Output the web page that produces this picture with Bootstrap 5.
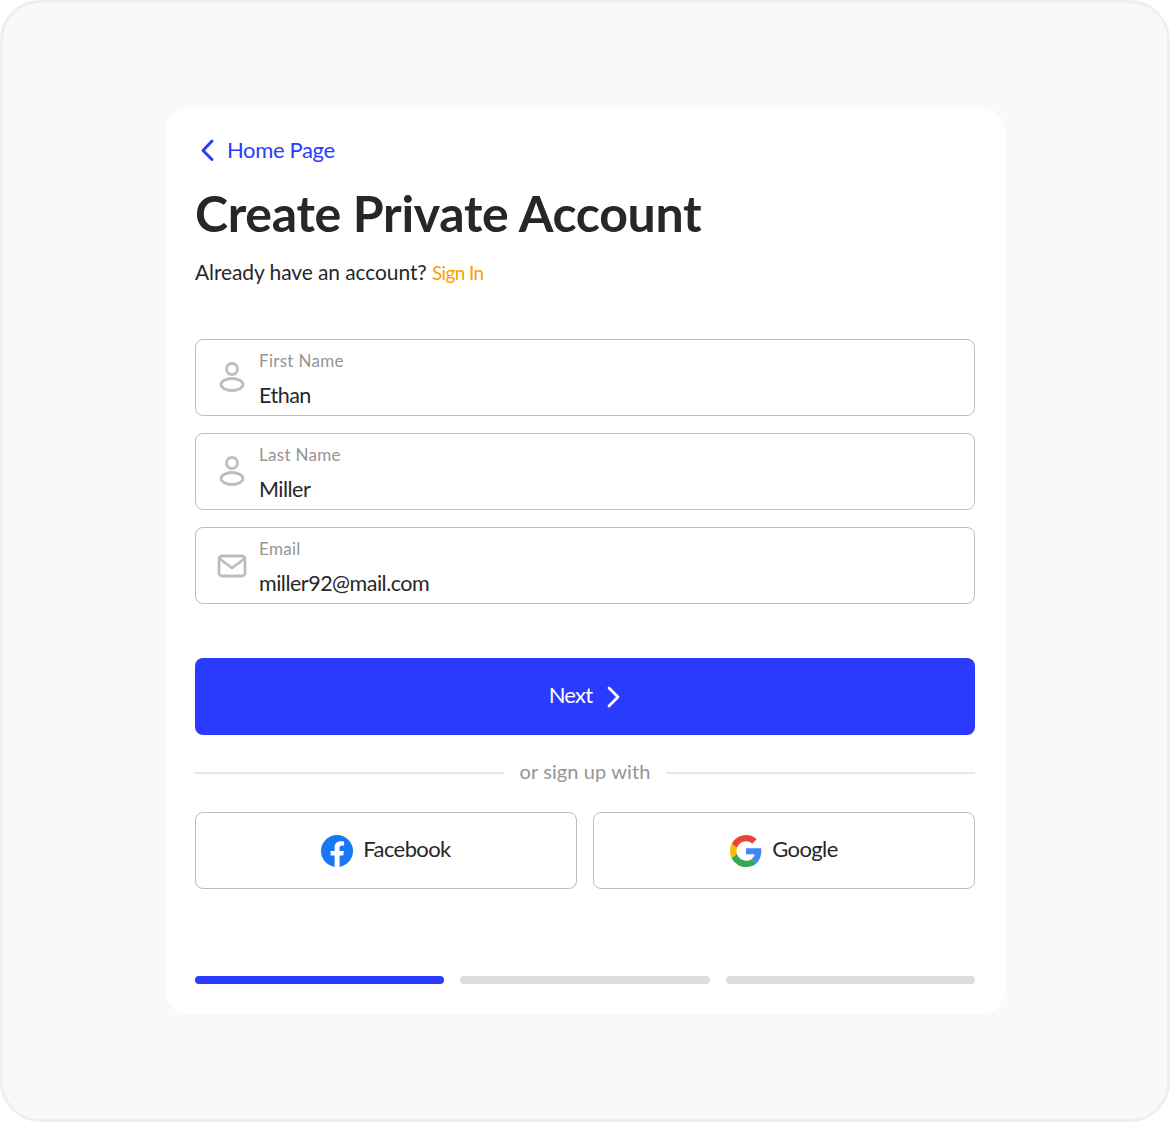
<!doctype html>
<html lang="en"><head><meta charset="utf-8">
<link href="https://cdn.jsdelivr.net/npm/bootstrap@5.3.0/dist/css/bootstrap.min.css" rel="stylesheet">
<style>
html,body{height:100%;margin:0;background:#fff}
body{font-family:"Lato","Noto Sans",sans-serif;color:#272727;overflow:hidden}
.stage{width:1170px;height:1122px;background:#f9f9f9;border:3px solid #efefef;border-radius:40px;padding-top:105px}
.panel{width:840px;height:906px;margin:0 auto;background:#fff;border-radius:24px;padding:30px;display:flex;flex-direction:column}
.home{color:#2a3bff;font-size:22px;line-height:24px;letter-spacing:-.35px;text-decoration:none;gap:10px}
.ttl{font-size:50px;font-weight:700;line-height:64px;margin:19px 0 15px;letter-spacing:-.3px;color:#272727}
.have{font-size:21px;line-height:24px;letter-spacing:-.1px;margin:0 0 54px}
.have a{color:#ff9d00;text-decoration:none;font-size:19px;letter-spacing:-.6px}
.fld{height:77px;border:1px solid #bdbdbd;border-radius:8px;padding:0 0 0 19px;gap:10px;margin-bottom:17px}
.ico{width:34px;flex:none;display:flex;justify-content:center}
.txt{padding-top:7px}
.lab{font-size:17px;line-height:20px;color:#959595;margin-top:-4px;letter-spacing:.3px}
.val{font-size:21.5px;line-height:26px;color:#272727;letter-spacing:-.5px;margin-top:11px}
.nxt{height:77px;background:#2a3bff;border:0;border-radius:8px;color:#fff;font-size:22px;letter-spacing:-.8px;margin-top:54px;gap:15px}
.nxt:hover{background:#2a3bff;color:#fff}
.lift{margin-bottom:4px}
.ors{height:24px;margin:26px 0 27px;gap:16px;color:#959595;font-size:20px;letter-spacing:.1px}
.ors i{flex:1;height:2px;background:#e7e7e7}
.soc{height:77px;border:1px solid #bdbdbd;border-radius:8px;background:#fff;font-size:22px;color:#272727;letter-spacing:-.6px;gap:10px}
.soc:hover{background:#fff;color:#272727;border-color:#bdbdbd}
.pgs{margin-top:auto;gap:16px}
.pgs span{flex:1;height:8px;border-radius:4px;background:#dcdcdc}
.pgs .on{background:#2a3bff}
</style></head><body>
<div class="stage"><main class="panel">
<a class="home d-flex align-items-center" href="#"><svg width="22" height="24" viewBox="0 0 22 24" fill="none" stroke="#2a3bff" stroke-width="3" stroke-linecap="round" stroke-linejoin="round"><path d="M17 3 8 12.500l9 9"/></svg>Home Page</a>
<h1 class="ttl">Create Private Account</h1>
<p class="have">Already have an account? <a href="#">Sign In</a></p>
<div class="fld d-flex align-items-center"><span class="ico"><svg width="26" height="32" viewBox="0 0 26 32" fill="none" stroke="#bdbdbd" stroke-width="2.800"><circle cx="13" cy="7" r="5.500"/><ellipse cx="13" cy="22.500" rx="11" ry="6"/></svg></span><div class="txt"><div class="lab">First Name</div><div class="val">Ethan</div></div></div>
<div class="fld d-flex align-items-center"><span class="ico"><svg width="26" height="32" viewBox="0 0 26 32" fill="none" stroke="#bdbdbd" stroke-width="2.800"><circle cx="13" cy="7" r="5.500"/><ellipse cx="13" cy="22.500" rx="11" ry="6"/></svg></span><div class="txt"><div class="lab">Last Name</div><div class="val">Miller</div></div></div>
<div class="fld d-flex align-items-center mb-0"><span class="ico"><svg width="30" height="26" viewBox="0 0 30 26" fill="none" stroke="#bdbdbd" stroke-width="2.800" stroke-linejoin="round"><rect x="2" y="3" width="26" height="20" rx="3"/><path d="M3 6l12 9 12-9"/></svg></span><div class="txt"><div class="lab">Email</div><div class="val">miller92@mail.com</div></div></div>
<button class="btn nxt d-flex align-items-center justify-content-center" type="button"><span class="lift">Next</span><svg width="14" height="24" viewBox="0 0 14 24" fill="none" stroke="#fff" stroke-width="2.800" stroke-linecap="round" stroke-linejoin="round"><path d="M2 3l9 9-9 9"/></svg></button>
<div class="ors d-flex align-items-center"><i></i><span class="lift">or sign up with</span><i></i></div>
<div class="d-flex gap-3">
<button class="btn soc flex-fill w-50 d-flex align-items-center justify-content-center" type="button"><svg width="32" height="32" viewBox="0 0 32 32"><circle cx="16" cy="16" r="16" fill="#1877f2"/><path fill="#fff" d="M22.200 20.600l.7-4.600h-4.400v-3c0-1.300.6-2.500 2.600-2.500h2V6.600s-1.800-.3-3.500-.3c-3.600 0-6 2.200-6 6.200V16h-4v4.600h4v11.100a16 16 0 0 0 5 0V20.600z"/></svg><span class="lift">Facebook</span></button>
<button class="btn soc flex-fill w-50 d-flex align-items-center justify-content-center" type="button"><svg width="32" height="32" viewBox="0 0 48 48"><path fill="#EA4335" d="M24 9.500c3.540 0 6.710 1.220 9.210 3.600l6.850-6.850C35.900 2.380 30.470 0 24 0 14.620 0 6.510 5.380 2.560 13.220l7.980 6.190C12.430 13.720 17.740 9.500 24 9.500z"/><path fill="#4285F4" d="M46.980 24.550c0-1.570-.15-3.090-.38-4.550H24v9.020h12.940c-.58 2.960-2.260 5.480-4.780 7.180l7.730 6c4.510-4.180 7.090-10.360 7.090-17.650z"/><path fill="#FBBC05" d="M10.530 28.590c-.48-1.450-.76-2.990-.76-4.590s.27-3.140.76-4.590l-7.980-6.190C.92 16.460 0 20.120 0 24c0 3.880.92 7.540 2.560 10.780l7.970-6.190z"/><path fill="#34A853" d="M24 48c6.480 0 11.930-2.130 15.890-5.810l-7.730-6c-2.150 1.450-4.920 2.300-8.160 2.300-6.260 0-11.570-4.220-13.470-9.910l-7.980 6.190C6.510 42.620 14.620 48 24 48z"/></svg><span class="lift">Google</span></button>
</div>
<div class="pgs d-flex"><span class="on"></span><span></span><span></span></div>
</main></div>
</body></html>
